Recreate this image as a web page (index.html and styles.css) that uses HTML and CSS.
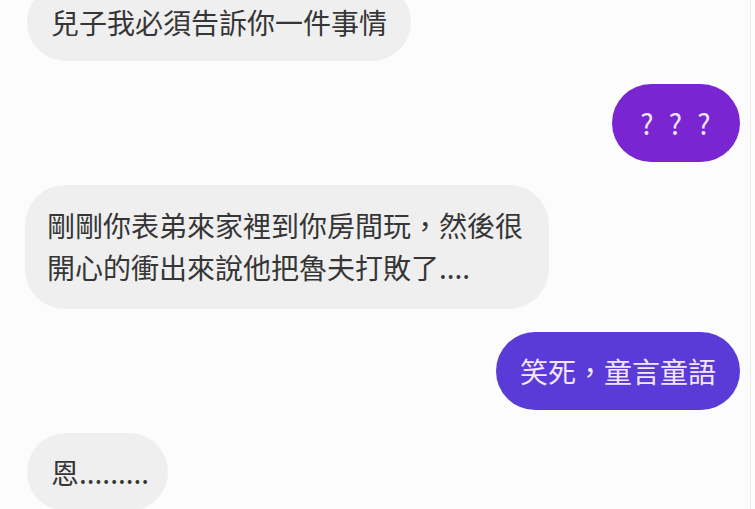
FILE: index.html
```html
<!DOCTYPE html>
<html lang="zh-Hant">
<head>
    <meta charset="UTF-8">
    <meta name="viewport" content="width=device-width, initial-scale=1.0">
    <title>對話</title>
    <link rel="stylesheet" href="styles.css">
</head>
<body>
    <div class="chat">
        <div class="msg received">兒子我必須告訴你一件事情</div>
        <div class="msg sent sent-violet"><span class="qmarks">? ? ?</span></div>
        <div class="msg received wide">剛剛你表弟來家裡到你房間玩，然後很開心的衝出來說他把魯夫打敗了....</div>
        <div class="msg sent sent-indigo">笑死，童言童語</div>
        <div class="msg received short">恩.........</div>
    </div>
</body>
</html>
```

FILE: styles.css
```css
* {
    margin: 0;
    padding: 0;
    box-sizing: border-box;
}

html,
body {
    height: 509px;
    overflow: hidden;
}

body {
    font-family: "Noto Sans CJK TC", "Noto Sans", sans-serif;
    background: #fdfcfd;
    color: #333;
}

.chat {
    display: flex;
    flex-direction: column;
    gap: 23px;
    width: 751px;
    height: 540px;
    margin-top: -17px;
    padding: 0 10px 0 27px;
    border-right: 1px solid #ececec;
}

.msg {
    flex-shrink: 0;
    font-size: 28px;
    line-height: 42px;
    padding: 18px 24px;
    border-radius: 39px;
}

.received {
    align-self: flex-start;
    background: #efefef;
    color: #363636;
}

.received.wide {
    max-width: 524px;
    padding: 19px 24px 21px 22px;
    margin-left: -2px;
    border-radius: 40px;
}

.received.short {
    padding-right: 19px;
}

.sent {
    align-self: flex-end;
    color: #f3e6f7;
}

.sent-violet {
    background: #7a25d2;
    padding: 18px 25px 18px 28px;
}

.qmarks {
    letter-spacing: 4.5px;
}

.sent-indigo {
    background: #5a3bd7;
}
```
